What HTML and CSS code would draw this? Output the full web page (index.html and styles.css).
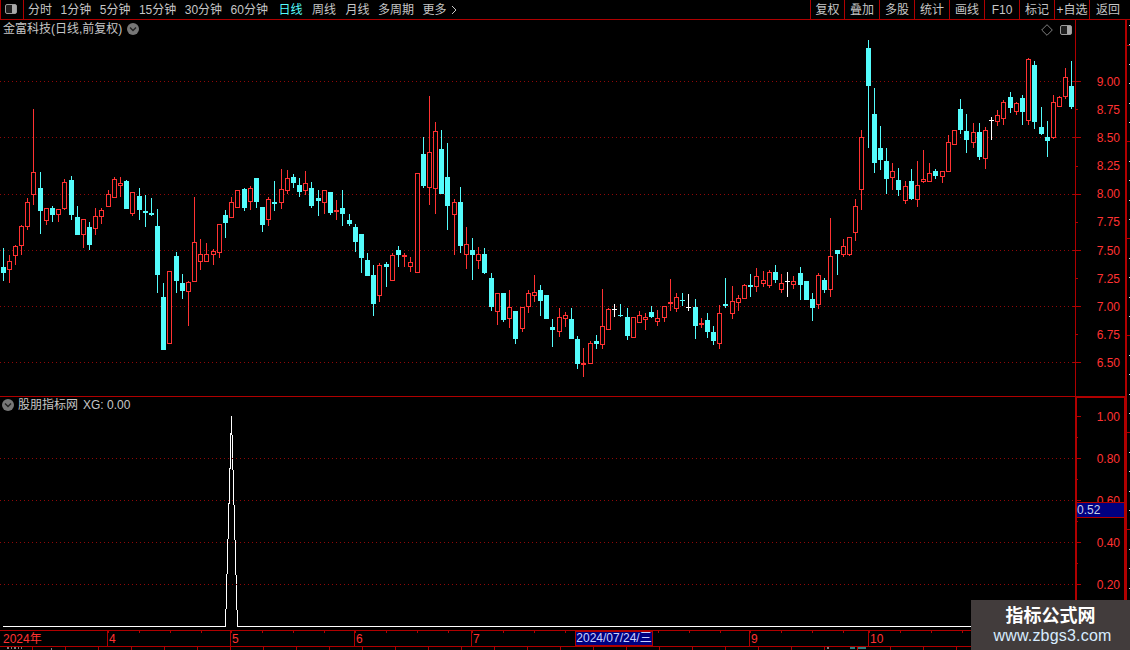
FILE: index.html
```html
<!DOCTYPE html>
<html lang="zh-CN">
<head>
<meta charset="utf-8">
<title>金富科技</title>
<link rel="stylesheet" href="styles.css">
</head>
<body>
<div class="app">
  <header class="toolbar">
    <div class="layout-btn">
      <svg class="icon-panel" viewBox="0 0 12 10"><rect x="0.5" y="0.5" width="11" height="9" rx="1.5" class="panel-frame"/><rect x="7" y="1" width="4" height="8" class="panel-fill"/></svg>
    </div>
    <nav class="periods">
      <span>分时</span><span>1分钟</span><span>5分钟</span><span>15分钟</span><span>30分钟</span><span>60分钟</span>
      <span class="active">日线</span><span class="spaced">周线</span><span class="spaced">月线</span><span>多周期</span><span>更多 <svg class="more" viewBox="0 0 6 10"><polyline points="1,1 5,5 1,9"/></svg></span>
    </nav>
    <div class="tools">
      <span class="tool">复权</span><span class="tool wide">叠加</span><span class="tool wide">多股</span><span class="tool wide">统计</span><span class="tool wide">画线</span><span class="tool wide">F10</span><span class="tool wide">标记</span><span class="tool wide">+自选</span><span class="tool back">返回</span>
    </div>
  </header>

  <div class="workspace">
    <div class="left">
      <section class="pane pane-main">
        <div class="plot">
          <svg id="price" class="chart" viewBox="0 20 1075 376"></svg>
          <div class="legend legend-main">
            <span>金富科技(日线,前复权)</span>
            <svg class="chev" viewBox="0 0 12 12"><circle cx="6" cy="6" r="6" class="chev-bg"/><polyline points="3,4.5 6,7.5 9,4.5" class="chev-line"/></svg>
          </div>
          <div class="corner-tools">
            <svg class="icon-diamond" viewBox="0 0 12 12"><polygon points="6,0.7 11.3,6 6,11.3 0.7,6" class="diamond"/></svg>
            <svg class="icon-panel" viewBox="0 0 12 10"><rect x="0.5" y="0.5" width="11" height="9" rx="1.5" class="panel-frame"/><rect x="7" y="1" width="4" height="8" class="panel-fill"/></svg>
          </div>
        </div>
        <div class="axis axis-main">
          <span>9.00</span><span>8.75</span><span>8.50</span><span>8.25</span><span>8.00</span><span>7.75</span><span>7.50</span><span>7.25</span><span>7.00</span><span>6.75</span><span>6.50</span>
        </div>
      </section>

      <section class="pane pane-sub">
        <div class="plot">
          <svg id="indicator" class="chart" viewBox="0 397 1075 233">
            <polyline class="spike" points="3,626.5 225.5,626.5 231.5,416.5 237.5,626.5 1075,626.5"/>
          </svg>
          <div class="legend legend-sub">
            <svg class="chev" viewBox="0 0 12 12"><circle cx="6" cy="6" r="6" class="chev-bg"/><polyline points="3,4.5 6,7.5 9,4.5" class="chev-line"/></svg>
            <span>股朋指标网</span><span>XG: 0.00</span>
          </div>
        </div>
        <div class="axis axis-sub">
          <span>1.00</span><span>0.80</span><span>0.60</span><span>0.40</span><span>0.20</span>
          <div class="cursor-value">0.52</div>
        </div>
      </section>

      <div class="timeaxis">
        <span class="month">2024年</span><span class="month">4</span><span class="month">5</span><span class="month">6</span><span class="month">7</span><span class="month">9</span><span class="month">10</span>
        <div class="cursor-date">2024/07/24/三</div>
      </div>
      <div class="tabstrip">
        <svg class="tabmarks" viewBox="0 0 1126 3">
          <path class="mark-white" d="M7 1h2M11 1h1M14 1h2M18 1h1M21 1h1M51 2h1M827 1h2"/>
          <path class="mark-cyan" d="M850 1h5M858 1h8"/>
        </svg>
      </div>
    </div>
    <div class="ruler"></div>
  </div>

  <aside class="watermark">
    <strong>指标公式网</strong>
    <span>www.zbgs3.com</span>
  </aside>
</div>
<script src="chart.js"></script>
</body>
</html>
```
FILE: styles.css
```css
* { box-sizing: border-box; }
html, body { margin: 0; background: #000; }
body { width: 1130px; height: 650px; overflow: hidden; font: 12px/14px "Liberation Sans", "Noto Sans CJK SC", sans-serif; color: #c6c6c6; }
.app { position: relative; width: 1130px; height: 650px; display: flex; flex-direction: column; }

.toolbar { height: 20px; display: flex; border-bottom: 1px solid #b00000; padding-right: 4px; }
.layout-btn { width: 24px; border-left: 1px solid #b00000; border-right: 1px solid #b00000; display: flex; align-items: center; padding: 0 0 1px 4px; }
.icon-panel { width: 12px; height: 10px; display: block; }
.panel-frame { fill: #1e1e1e; stroke: #9a9a9a; }
.panel-fill { fill: #a8a8a8; }
.periods { display: flex; align-items: center; gap: 8.5px; padding-left: 4px; }
.periods .active { color: #54fcfc; margin-left: 2px; }
.periods .spaced { margin-left: 1px; }
.more { width: 6px; height: 10px; margin-left: 1px; vertical-align: -1px; }
.more polyline { fill: none; stroke: #c6c6c6; stroke-width: 1; }
.tools { margin-left: auto; display: flex; }
.tool { width: 35px; border-left: 1px solid #b00000; display: flex; align-items: center; justify-content: center; white-space: nowrap; }
.tool:first-child { width: 34px; }
.tool.back { width: 37px; }

.workspace { flex: 1; display: flex; min-height: 0; }
.left { width: 1126px; display: flex; flex-direction: column; }
.ruler { width: 4px; border-left: 1px solid #b00000;
  background:
    linear-gradient(#b00000, #b00000) 0 25px / 3px 1px no-repeat,
    repeating-linear-gradient(180deg, #b00000 0 1px, transparent 1px 97px) 0 121px / 3px 100% no-repeat,
    repeating-linear-gradient(180deg, #d8d8d8 0 1px, transparent 1px 19.4px) 2px 5px / 1px 100% no-repeat; }

.pane { display: flex; }
.pane-main { height: 377px; border-bottom: 1px solid #b00000; }
.pane-sub { height: 233px; }
.plot { position: relative; width: 1075px; }
.chart { display: block; width: 1075px; height: 100%; overflow: visible; }
.spike { fill: none; stroke: #fff; stroke-width: 1; shape-rendering: crispEdges; }

.legend { position: absolute; display: flex; align-items: center; white-space: nowrap; }
.legend-main { left: 3px; top: 2px; gap: 5px; }
.legend-sub { left: 2px; top: 1px; gap: 4px; }
.legend-sub span + span { margin-left: 1px; }
.chev { width: 12px; height: 12px; display: block; }
.chev-bg { fill: #777; }
.chev-line { fill: none; stroke: #222; stroke-width: 1.4; }
.corner-tools { position: absolute; right: 3px; top: 4px; display: flex; align-items: center; gap: 7px; }
.icon-diamond { width: 12px; height: 12px; display: block; }
.diamond { fill: none; stroke: #808080; }

.axis { flex: 1; display: grid; justify-items: end; align-content: start; color: #ff3232; padding-right: 5px; position: relative; border-right: 1px solid #b00000; }
.axis-main { border-left: 1px solid #b00000; padding-top: 55px; grid-auto-rows: 28.1px; }
.axis-sub { border-left: 2px solid #b00000; border-right-width: 2px; border-top: 1px solid #b00000; padding-top: 12px; grid-auto-rows: 42px; padding-right: 4px; }
.cursor-value { position: absolute; left: 0; right: 0; top: 104px; height: 16px; background: #000080; border-top: 1px solid #b00000; border-bottom: 1px solid #b00000; color: #c8d0e8; padding-left: 0; }

.timeaxis { position: relative; height: 17px; flex: none; border-top: 1px solid #b00000; border-bottom: 1px solid #b00000; display: grid; grid-template-columns: 107px 123px 124px 117px 278px 119px 1fr; color: #ff3232; }
.month { padding: 1px 0 0 1px; border-left: 1px solid #b00000; background: repeating-linear-gradient(90deg, #b00000 0 1px, transparent 1px 31px) 0 0 / 100% 2px no-repeat; }
.month:first-child { padding-left: 3px; border-left: 0; background: none; }
.cursor-date { position: absolute; left: 575px; top: 0; width: 78px; height: 15px; background: #000080; border: 1px solid #b00000; color: #c8d0ff; text-align: center; line-height: 13px; white-space: nowrap; }
.tabstrip { flex: 1; background: repeating-linear-gradient(90deg, transparent 0 32px, #b00000 32px 33px); }
.tabmarks { display: block; width: 1126px; height: 3px; }
.mark-white { stroke: #fff; fill: none; stroke-width: 1; }
.mark-cyan { stroke: #54fcfc; fill: none; stroke-width: 1; }

.grid-line { stroke: #900808; stroke-width: 1; stroke-dasharray: 1 3; shape-rendering: crispEdges; }
.tick { stroke: #b00000; stroke-width: 1; shape-rendering: crispEdges; }
.wick-r { fill: #ff3232; } .body-r { fill: none; stroke: #ff3232; shape-rendering: crispEdges; }
.wick-c { fill: #54fcfc; } .body-c { fill: #54fcfc; }
.wick-w { fill: #fff; } .body-w { fill: #fff; }

.watermark { position: absolute; left: 971px; top: 600px; width: 159px; height: 50px; background: #423c3c; display: flex; flex-direction: column; align-items: center; padding-top: 6px; }
.watermark strong { font-size: 18px; line-height: 20px; color: #fff; }
.watermark span { font-size: 16px; line-height: 20px; letter-spacing: .2px; margin-left: 4px; color: #d8ecff; }
```
FILE: chart.js
```js
// Candles read as [type, x, high, top, bottom, low] per screen segment (origin ox,oy, 3x units).
var segments = [
  [0, 100, "c10,445,501,519,543 r28,465,484,509,549 r46,436,439,467,495 r64,376,379,437,465 r82,294,307,380,389 r100,27,217,284,315 c121,216,264,333,402 r139,325,325,362,375 c157,318,324,345,366 r175,328,328,344,366 r193,237,247,326,330 c214,228,240,345,360 c232,318,351,405,405 r250,358,358,404,444 c268,366,381,435,450 r286,324,349,386,405 r304,324,331,350,372 r325,270,283,320,320 r343,232,238,293,293 r361,232,250,257,291 c379,240,243,327,327 r397,275,277,341,347 c418,264,288,330,360 c436,285,333,339,381 c454,294,339,345,348 c472,327,378,525,579 c490,549,591,750,750 r508,514,514,731,731 c529,456,468,543,579 c547,522,549,573,597 r565,544,547,575,678 r583,291,427,545,545 r601,417,463,485,510 r619,429,463,485,485 r640,447,454,464,495 r658,372,373,458,474 c676,330,345,369,414 r694,291,307,353,353 r712,271,271,323,323 c733,264,267,324,333 r751,258,265,305,330 c769,234,234,306,324 c787,321,321,375,396 r805,291,298,359,378"],
  [270, 90, "c13,273,336,342,363 r34,237,298,338,357 r52,240,265,302,312 c70,252,262,279,294 c88,264,285,306,321 r106,243,280,302,315 c124,276,294,348,354 c145,300,324,333,378 r163,300,301,338,372 c181,306,306,369,375 r199,330,360,366,390 c217,300,354,372,408 c238,372,390,402,408 c256,402,411,456,486 c274,432,432,504,549 c292,489,510,558,558 c310,525,555,642,678 r328,519,526,617,636 c349,516,522,531,591 r367,489,496,572,572 c385,468,480,495,531 r403,489,495,501,531 r421,501,517,530,546 r442,250,250,548,548 c460,141,192,288,294 r478,18,187,293,345 r496,96,124,296,372 c514,120,177,312,312 c532,159,261,348,420 r553,327,337,374,495 c571,291,336,468,489 r589,411,463,495,537 c607,444,480,495,570 r625,471,493,513,537 c643,474,492,549,552 c664,549,564,651,663 r682,610,610,665,705 c700,609,609,690,696 r718,600,652,686,714 c736,663,663,747,762 r757,652,652,716,726 r775,600,610,651,669 r793,555,607,617,636"],
  [540, 200, "c1,255,270,303,348 c19,285,285,357,357 c37,358,381,390,441 r58,324,352,395,411 r76,336,346,358,381 c94,324,357,417,417 c112,408,417,492,507 r130,444,489,495,531 r151,424,430,491,491 c169,405,423,432,447 r187,267,379,434,447 r205,325,328,389,389 w223,312,327,329,351 c241,312,346,348,351 c262,324,351,408,420 r280,351,352,413,413 r298,333,346,368,368 r316,339,352,361,390 c334,318,336,351,354 r352,330,355,365,378 r373,318,319,353,366 r391,237,306,312,333 r409,279,292,326,336 c427,279,300,302,318 w445,282,320,322,333 c466,297,321,378,417 r484,354,370,376,384 c502,339,360,396,414 c520,378,396,423,435 r538,315,340,431,447 c556,234,312,318,324 r577,258,304,342,357 r595,285,295,308,333 r613,252,255,296,296 c631,222,255,261,291 r649,204,229,262,276 r670,213,240,251,261 r688,210,217,258,264 c706,195,216,240,249 r724,222,250,269,279 w742,216,243,245,291 r760,228,244,254,267 c781,201,219,255,300 c799,243,243,300,300 c817,279,297,324,363"],
  [810, 30, "r25,730,736,824,837 c43,744,750,780,789 r61,564,679,779,801 c82,660,660,672,735 r100,627,649,674,681 r118,620,622,675,677 r136,507,529,608,633 r154,300,322,479,540 c175,30,54,168,354 c193,174,252,399,429 c211,288,354,390,420 c229,354,393,447,492 r247,400,424,443,480 c265,414,450,480,498 r286,453,469,512,522 c304,417,453,507,510 r322,393,466,509,531 r340,360,448,455,458 r358,399,430,455,455 c376,417,423,438,447 r397,424,424,440,459 r415,315,337,425,425 r433,301,301,344,344 c451,207,237,300,312 c469,252,303,330,369 r490,279,307,339,354 c508,279,306,381,390 r526,291,301,386,417 w544,261,270,272,330 r562,240,256,275,288 r580,210,217,266,285 c601,186,201,234,249 r619,216,220,245,255 c637,195,204,246,285 r655,84,88,272,285 c673,93,105,276,297 c694,231,291,312,315 c712,273,321,333,381 r730,195,217,324,327 r748,199,202,231,231 r766,114,142,200,206 c784,93,168,231,237"]
];

var NS = "http://www.w3.org/2000/svg";
function add(svg, name, attrs) {
  var el = document.createElementNS(NS, name);
  for (var k in attrs) el.setAttribute(k, attrs[k]);
  svg.appendChild(el);
  return el;
}
function hline(svg, cls, x1, x2, y) {
  add(svg, "line", { "class": cls, x1: x1, x2: x2, y1: y + 0.5, y2: y + 0.5 });
}

var price = document.getElementById("price");
var indicator = document.getElementById("indicator");

[81, 137, 194, 250, 306, 362].forEach(function (y) { hline(price, "grid-line", 0, 1075, y); });
[458, 500, 542, 584].forEach(function (y) { hline(indicator, "grid-line", 0, 1075, y); });

[81, 109, 137, 166, 194, 222, 250, 278, 306, 334, 362].forEach(function (y, i) {
  if (i % 2 === 0) hline(price, "tick", 1073, 1081, y); else hline(price, "tick", 1076, 1078, y);
});
[416, 458, 500, 542, 584].forEach(function (y) { hline(indicator, "tick", 1076, 1081, y); });
[437, 479, 521, 563, 605].forEach(function (y) { hline(indicator, "tick", 1076, 1078, y); });

segments.forEach(function (seg) {
  seg[2].split(" ").forEach(function (row) {
    var type = row.charAt(0);
    var v = row.slice(1).split(",").map(Number);
    var col = Math.floor(seg[0] + v[0] / 3);
    var Y = function (z) { return Math.round(seg[1] + z / 3); };
    var hi = Y(v[1]), top = Y(v[2]), bot = Y(v[3]), lo = Y(v[4]);
    add(price, "rect", { "class": "wick-" + type, x: col, y: hi, width: 1, height: Math.max(lo - hi, 1) });
    if (type === "r") {
      add(price, "rect", { "class": "body-r", x: col - 1.5, y: top + 0.5, width: 4, height: Math.max(bot - top - 1, 1), style: "fill:#000" });
    } else {
      add(price, "rect", { "class": "body-" + type, x: col - 2, y: top, width: 5, height: Math.max(bot - top, 1) });
    }
  });
});
```
